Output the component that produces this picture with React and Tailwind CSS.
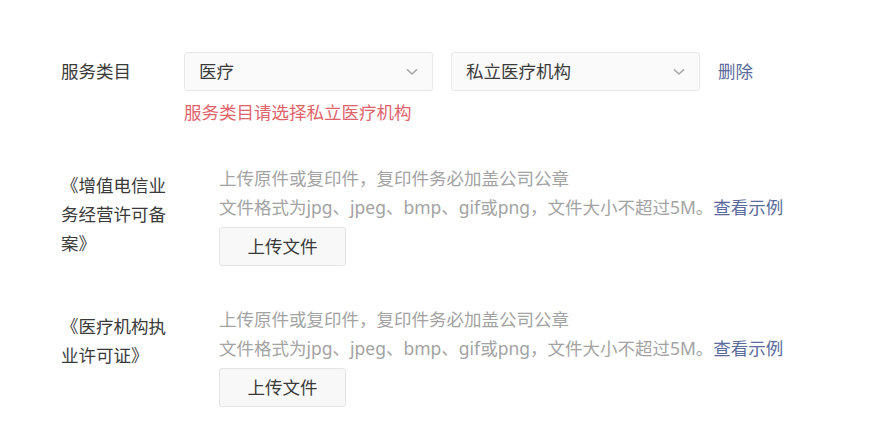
import React from 'react';

const font = { fontFamily: '"Noto Sans", "Noto Sans CJK SC", sans-serif' };

function Chevron() {
  return (
    <svg width="12" height="8" viewBox="0 0 12 8" className="shrink-0">
      <path d="M1.5 1.8 L6 6 L10.5 1.8" fill="none" stroke="#a9a9a9" strokeWidth="1.6" strokeLinecap="round" strokeLinejoin="round" />
    </svg>
  );
}

function Select({ value }) {
  return (
    <div className="flex items-center justify-between w-[249px] h-[39px] pl-[14px] pr-[14px] bg-[#fafafa] border border-[#e8e8e8] rounded-[3px] text-[17.5px] text-[#3a3a3a]">
      <span>{value}</span>
      <Chevron />
    </div>
  );
}

function UploadSection({ label }) {
  return (
    <div className="flex">
      <div className="w-[158px] shrink-0 pt-[7px]">
        <p className="w-[112px] text-[17.5px] leading-[29px] text-[#3a3a3a]">{label}</p>
      </div>
      <div>
        <p className="text-[17.5px] leading-[29px] text-[#a3a3a3]">上传原件或复印件，复印件务必加盖公司公章</p>
        <p className="text-[17.5px] leading-[29px] text-[#a3a3a3] whitespace-nowrap">
          文件格式为jpg、jpeg、bmp、gif或png，文件大小不超过5M。
          <a className="text-[#5a6b9c] cursor-pointer">查看示例</a>
        </p>
        <button className="mt-[5px] w-[127px] h-[39px] bg-[#f8f8f8] border border-[#e4e4e4] rounded-[3px] text-[17.5px] text-[#3a3a3a]">
          上传文件
        </button>
      </div>
    </div>
  );
}

export default function App() {
  return (
    <div className="w-[888px] h-[436px] bg-white pl-[61px] pt-[52px]" style={font}>
      {/* 服务类目 */}
      <div className="flex items-center">
        <span className="w-[123px] shrink-0 text-[17.5px] text-[#3a3a3a]">服务类目</span>
        <Select value="医疗" />
        <div className="ml-[18px]">
          <Select value="私立医疗机构" />
        </div>
        <a className="ml-[18px] text-[17.5px] text-[#5a6b9c] cursor-pointer">删除</a>
      </div>
      <p className="pl-[123px] mt-[9px] text-[17.5px] leading-[24px] text-[#e0636c]">服务类目请选择私立医疗机构</p>

      <div className="mt-[40px]">
        <UploadSection label="《增值电信业务经营许可备案》" />
      </div>
      <div className="mt-[39px]">
        <UploadSection label="《医疗机构执业许可证》" />
      </div>
    </div>
  );
}
